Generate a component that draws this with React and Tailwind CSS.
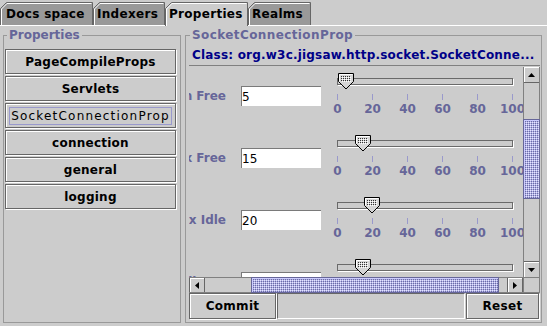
import React from 'react';

const bump =
  'bg-[conic-gradient(#b0b0e4_0_90deg,#6c6ca6_0_180deg,#b0b0e4_0_270deg,#e6e6ff_0)] bg-[length:2px_2px]';

const tabs = [
  { label: 'Docs space', w: 93, cls: 'w-[93px] pl-[6px]' },
  { label: 'Indexers', w: 72, cls: 'w-[72px] pl-[4px]' },
  { label: 'Properties', w: 83, cls: 'w-[83px] pl-[4px]', selected: true },
  { label: 'Realms', w: 63, cls: 'w-[63px] pl-[4px]' },
];

const rows = [
  { label: 'Min Free', value: '5', v: 5, labels: true },
  { label: 'Max Free', value: '15', v: 15, labels: true },
  { label: 'Max Idle', value: '20', v: 20, labels: true },
  { label: 'Max Clients', value: '32', v: 15, labels: false },
];

function Tab({ label, w, selected, cls }) {
  const h = selected ? 24 : 23;
  return (
    <div className={`relative ${cls} ${selected ? 'h-[24px] -mb-px z-10' : 'h-[23px]'}`}>
      <svg className="absolute left-0 top-0" width={w} height={h}>
        <path
          d={`M0.5 ${h} V6.5 L6.5 0.5 H${w - 0.5} V${h}`}
          fill={selected ? '#cccccc' : '#999999'}
          stroke="#666666"
        />
        <path d={`M1.5 ${h} V7 L7 1.5 H${w - 1.5}`} fill="none" stroke="#ffffff" />
      </svg>
      <span className="relative flex h-[23px] items-center font-bold text-[12px] tracking-[0.3px] whitespace-nowrap">
        {label}
      </span>
    </div>
  );
}

function MetalButton({ children, className }) {
  return (
    <div
      className={`flex items-center justify-center border border-[#666666] bg-[#cccccc] shadow-[inset_1px_1px_0_#ffffff,1px_1px_0_#ffffff] text-[12px] text-black whitespace-nowrap ${className}`}
    >
      {children}
    </div>
  );
}

function SliderThumb({ id }) {
  return (
    <svg width="16" height="17" viewBox="0 0 16 17" className="block">
      <defs>
        <pattern id={id} width="2" height="2" patternUnits="userSpaceOnUse">
          <rect x="0" y="0" width="1" height="1" fill="#ffffff" />
          <rect x="1" y="1" width="1" height="1" fill="#333333" />
        </pattern>
      </defs>
      <path d="M0.5 0.5 H15.5 V8.5 L8 16 L0.5 8.5 Z" fill="#d6d6d6" stroke="#000000" />
      <path d="M1.5 8.5 V1.5 H14.5" fill="none" stroke="#ffffff" />
      <rect x="3" y="3" width="10" height="6" fill={`url(#${id})`} />
    </svg>
  );
}

function Slider({ v, id, labels }) {
  const ticks = ['0', '20', '40', '60', '80', '100'];
  return (
    <div className="ml-[8px] w-[194px] pt-[11px] shrink-0">
      <div className="relative ml-[8px] h-[7px] w-[176px] border border-[#6a6a6a] bg-[#cccccc] shadow-[1px_1px_0_#ffffff]">
        <div className="absolute top-[-6px]" style={{ left: `${v * 1.75 - 9}px` }}>
          <SliderThumb id={id} />
        </div>
      </div>
      <div className="ml-[8px] mt-[9px] flex h-[6px] w-[176px] justify-between">
        {ticks.map((t) => (
          <div key={t} className="h-full w-px bg-[#9999cc]" />
        ))}
      </div>
      {labels && (
        <div className="ml-[8px] mt-[2px] flex h-[14px] w-[176px] justify-between">
          {ticks.map((t) => (
            <div key={t} className="flex w-px justify-center">
              <span className="whitespace-nowrap text-[12px] font-bold leading-[14px] text-[#666699]">{t}</span>
            </div>
          ))}
        </div>
      )}
    </div>
  );
}

function Row({ label, value, v, idx, labels }) {
  return (
    <div className="flex h-[62px] items-start">
      <div className="mt-[19px] flex h-[20px] items-center">
        <div className="w-[99px] whitespace-nowrap text-right text-[12px] font-bold text-[#666699]">{label}</div>
        <div className="ml-[15px] flex h-[20px] w-[80px] items-center border-l border-t border-[#7a7a7a] bg-white text-[12px] text-black">
          {value}
        </div>
      </div>
      <Slider v={v} id={`bumps${idx}`} labels={labels} />
    </div>
  );
}

function Arrow({ dir }) {
  if (dir === 'up')
    return (
      <svg width="7" height="4" className="block">
        <polygon points="3.5,0 7,4 0,4" fill="#000" />
      </svg>
    );
  if (dir === 'down')
    return (
      <svg width="7" height="4" className="block">
        <polygon points="0,0 7,0 3.5,4" fill="#000" />
      </svg>
    );
  if (dir === 'left')
    return (
      <svg width="4" height="7" className="block">
        <polygon points="4,0 4,7 0,3.5" fill="#000" />
      </svg>
    );
  return (
    <svg width="4" height="7" className="block">
      <polygon points="0,0 4,3.5 0,7" fill="#000" />
    </svg>
  );
}

function LeftPanel() {
  const items = ['PageCompileProps', 'Servlets', 'SocketConnectionProp', 'connection', 'general', 'logging'];
  return (
    <div className="ml-[3px] h-[288px] w-[178px] shrink-0 border border-[#999999]">
      <div className="-mt-[8px] ml-[3px] h-[14px] w-fit bg-[#cccccc] px-[2px] text-[12px] font-bold leading-[14px] text-[#666699]">
        Properties
      </div>
      <div className="mt-[7px] flex flex-col gap-[2px] pl-[1px]">
        {items.map((it) =>
          it === 'SocketConnectionProp' ? (
            <MetalButton key={it} className="h-[25px] w-[171px]">
              <span className="border border-[#9999cc] px-px leading-[16px] tracking-[1.2px]">{it}</span>
            </MetalButton>
          ) : (
            <MetalButton key={it} className="h-[25px] w-[171px] font-bold tracking-[0.25px]">
              {it}
            </MetalButton>
          )
        )}
      </div>
    </div>
  );
}

function RightPanel() {
  return (
    <div className="ml-[4px] h-[288px] w-[357px] shrink-0 border border-[#999999]">
      <div className="-mt-[8px] ml-[4px] h-[14px] w-fit bg-[#cccccc] px-[2px] text-[12px] font-bold leading-[14px] tracking-[0.4px] text-[#666699]">
        SocketConnectionProp
      </div>
      <div className="mt-[6px] h-[14px] whitespace-nowrap pl-[6px] text-[12px] font-bold leading-[14px] tracking-[0.2px] text-[#000088]">
        Class: org.w3c.jigsaw.http.socket.SocketConne...
      </div>
      <div className="ml-[3px] mt-[3px] flex h-[228px] w-[351px] flex-col border-t border-[#808080] pt-px">
        <div className="flex h-[210px]">
          <div className="h-[210px] w-[334px] overflow-hidden bg-[#cccccc]">
            <div className="-ml-[62px] w-[420px]">
              {rows.map((r, i) => (
                <Row key={r.label} {...r} idx={i} />
              ))}
            </div>
          </div>
          <div className="flex h-[210px] w-[17px] flex-col border-x border-[#808080] bg-[#cccccc]">
            <div className="flex h-[16px] items-center justify-center border-b border-[#666666] shadow-[inset_1px_1px_0_#ffffff]">
              <Arrow dir="up" />
            </div>
            <div className="flex-1">
              <div className={`-mx-px mt-[36px] h-[80px] border border-[#666699] shadow-[inset_1px_1px_0_#ccccff] ${bump}`} />
            </div>
            <div className="flex h-[16px] items-center justify-center border-t border-[#666666] shadow-[inset_1px_1px_0_#ffffff]">
              <Arrow dir="down" />
            </div>
          </div>
        </div>
        <div className="flex h-[16px]">
          <div className="flex h-[16px] w-[334px] border-y border-[#808080] bg-[#cccccc]">
            <div className="flex w-[16px] items-center justify-center border-x border-[#666666] shadow-[inset_1px_1px_0_#ffffff]">
              <Arrow dir="left" />
            </div>
            <div className="flex-1">
              <div className={`-my-px ml-[46px] h-[16px] w-[248px] border border-[#666699] shadow-[inset_1px_1px_0_#ccccff] ${bump}`} />
            </div>
            <div className="flex w-[16px] items-center justify-center border-x border-[#666666] shadow-[inset_1px_1px_0_#ffffff]">
              <Arrow dir="right" />
            </div>
          </div>
          <div className="h-[16px] w-[17px] border border-[#808080] bg-[#cccccc]" />
        </div>
      </div>
      <div className="ml-[3px] flex gap-px">
        <MetalButton className="h-[26px] w-[87px] font-bold tracking-[0.3px]">Commit</MetalButton>
        <div className="h-[26px] w-[188px] border-b border-l border-r border-t border-b-white border-l-[#666666] border-r-white border-t-[#666666] bg-[#cccccc]" />
        <MetalButton className="h-[26px] w-[73px] font-bold tracking-[0.3px]">Reset</MetalButton>
      </div>
    </div>
  );
}

export default function App() {
  return (
    <div className="h-[326px] w-[547px] overflow-hidden bg-[#cccccc] font-['DejaVu_Sans',sans-serif] text-[12px] text-black">
      <div className="flex h-[25px] items-end">
        {tabs.map((t) => (
          <Tab key={t.label} {...t} />
        ))}
      </div>
      <div className="flex h-[301px] border-t border-white pt-[9px]">
        <LeftPanel />
        <RightPanel />
      </div>
    </div>
  );
}
